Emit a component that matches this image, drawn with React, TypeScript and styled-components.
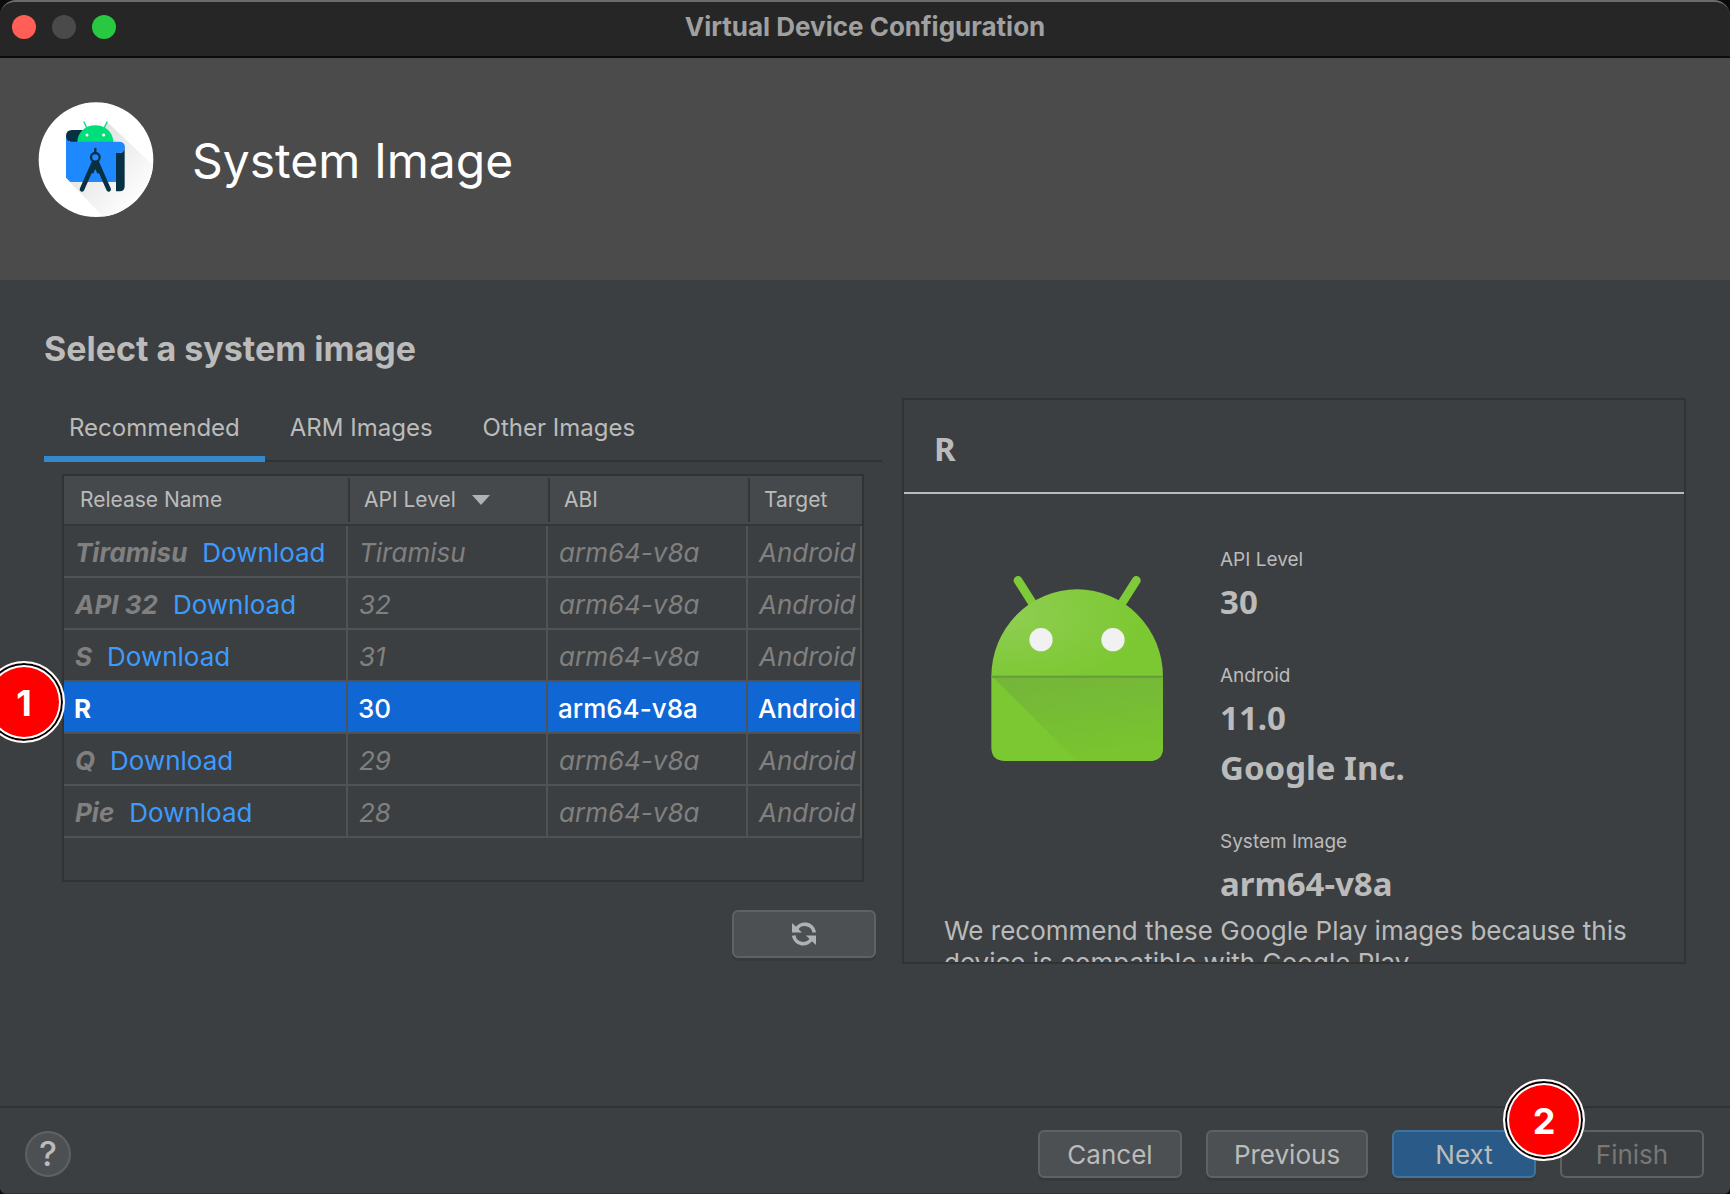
import React, { useState } from 'react';
import styled, { createGlobalStyle, css } from 'styled-components';

const ui = 'Inter, "Liberation Sans", sans-serif';
const detailFont = '"Noto Sans", "Open Sans", sans-serif';

const c = {
  bg: '#3c3f41',
  text: '#bbbbbb',
  muted: '#808080',
  line: '#323232',
  grid: '#505355',
  headerCell: '#45494b',
  headerLine: '#33373a',
  link: '#3d9bff',
  selected: '#1067d3',
  button: '#4c5052',
  buttonBorder: '#5e6263',
};

const GlobalStyle = createGlobalStyle`
  *, *::before, *::after { box-sizing: border-box; }
  body { margin: 0; background: #0b0b0b; }
  button { font: inherit; cursor: pointer; }
`;

const Window = styled.div`
  min-height: 100vh;
  display: flex;
  flex-direction: column;
  overflow: hidden;
  border-top: 2px solid #6c6c6c;
  border-bottom: 1px solid #343234;
  border-radius: 16px 16px 6px 6px;
  background: ${c.bg};
  color: ${c.text};
  font-family: ${ui};
`;

const TitleBar = styled.header`
  display: grid;
  grid-template-columns: 1fr auto 1fr;
  align-items: center;
  height: 56px;
  padding: 0 12px 4px;
  background: #262626;
  border-bottom: 2px solid #0c0c0c;
`;

const TrafficLights = styled.div`
  display: flex;
  gap: 16px;
`;

const Light = styled.button<{ $color: string }>`
  width: 24px;
  height: 24px;
  padding: 0;
  border: 0;
  border-radius: 50%;
  background: ${(p) => p.$color};
`;

const WindowTitle = styled.div`
  font-size: 26px;
  line-height: 32px;
  font-weight: 700;
  color: #a0a0a0;
`;

const Banner = styled.div`
  display: flex;
  align-items: flex-start;
  gap: 38px;
  height: 222px;
  padding: 44px 38px;
  background: #4b4b4b;
`;

const BannerTitle = styled.h1`
  margin: 0;
  font-size: 48px;
  line-height: 118px;
  font-weight: 400;
  color: #ffffff;
`;

const Main = styled.main`
  flex: 1;
  padding: 49px 44px 24px;
`;

const SectionTitle = styled.h2`
  margin: 0 0 29px;
  font-size: 34px;
  line-height: 40px;
  font-weight: 700;
`;

const Columns = styled.div`
  display: grid;
  grid-template-columns: minmax(0, 838fr) minmax(0, 784fr);
  gap: 20px;
  align-items: start;
`;

const TabList = styled.div`
  display: flex;
  box-shadow: inset 0 -2px ${c.line};
`;

const Tab = styled.button<{ $active: boolean }>`
  height: 64px;
  padding: 0 25px;
  border: 0;
  border-top: 2px solid transparent;
  border-bottom: 6px solid ${(p) => (p.$active ? '#3489cc' : 'transparent')};
  background: none;
  color: ${c.text};
  font-size: 24px;
  line-height: 30px;
`;

const TableFrame = styled.div`
  min-height: 408px;
  margin: 12px 18px 28px;
  border: 2px solid ${c.line};
`;

const Table = styled.table`
  width: 100%;
  table-layout: fixed;
  border-spacing: 0;
`;

const Col = styled.col<{ $width?: number }>`
  ${(p) => p.$width && css`width: ${p.$width}px;`}
`;

const HeadCell = styled.th`
  height: 50px;
  padding: 0;
  background: ${c.headerCell};
  border-bottom: 2px solid ${c.headerLine};
  font-size: 21px;
  line-height: 44px;
  font-weight: 400;
  text-align: left;
`;

const HeadLabel = styled.div<{ $divided: boolean }>`
  display: flex;
  align-items: center;
  gap: 16px;
  padding-left: 14px;
  border-left: 2px solid ${(p) => (p.$divided ? c.headerLine : 'transparent')};
`;

const Cell = styled.td<{ $selected: boolean }>`
  position: relative;
  height: 52px;
  padding: 4px 0 0 ${(p) => (p.$selected ? 10 : 11)}px;
  border-right: 2px solid ${c.grid};
  border-bottom: 2px solid ${c.grid};
  background: ${(p) => (p.$selected ? c.selected : 'transparent')};
  color: ${(p) => (p.$selected ? '#ffffff' : c.muted)};
  font-size: 26px;
  line-height: 32px;
  font-style: ${(p) => (p.$selected ? 'normal' : 'italic')};
  font-weight: ${(p) => (p.$selected ? 500 : 400)};
  white-space: nowrap;
`;

const ReleaseName = styled.span`
  font-weight: 700;
`;

const DownloadLink = styled.a`
  margin-left: 15px;
  color: ${c.link};
  font-style: normal;
  text-decoration: none;
`;

const Toolbar = styled.div`
  display: flex;
  justify-content: flex-end;
  padding-right: 6px;
`;

const Button = styled.button<{ $variant?: 'primary' | 'disabled'; $wide?: boolean }>`
  display: flex;
  align-items: center;
  justify-content: center;
  width: ${(p) => (p.$wide ? 162 : 144)}px;
  height: 48px;
  padding: 2px 0 0;
  border: 2px solid ${c.buttonBorder};
  border-radius: 6px;
  background: ${c.button};
  box-shadow: 0 3px #37393b;
  color: ${c.text};
  font-size: 26px;
  line-height: 32px;
  ${(p) => p.$variant === 'primary' && css`
    border-color: #3f74a0;
    background: #2a5a87;
  `}
  ${(p) => p.$variant === 'disabled' && css`
    background: transparent;
    box-shadow: none;
    color: #777777;
  `}
`;

const RefreshButton = styled(Button)`
  padding: 0;
`;

const Panel = styled.section`
  height: 566px;
  overflow: hidden;
  border: 2px solid ${c.line};
`;

const PanelTitle = styled.h3`
  margin: 0;
  padding: 24px 30px 18px;
  border-bottom: 2px solid ${c.text};
  font-family: ${detailFont};
  font-size: 33px;
  line-height: 50px;
  font-weight: 700;
`;

const PanelBody = styled.div`
  display: flex;
  align-items: flex-start;
  gap: 55px;
  padding: 53px 24px 6px 85px;
`;

const RobotBox = styled.div`
  padding-top: 27px;
  line-height: 0;
`;

const Facts = styled.dl`
  display: flex;
  flex-direction: column;
  gap: 36px;
  margin: 0;
`;

const FactLabel = styled.dt`
  margin-bottom: 4px;
  font-size: 19px;
  line-height: 26px;
`;

const FactValue = styled.dd`
  margin: 0;
  font-family: ${detailFont};
  font-size: 33px;
  line-height: 50px;
  font-weight: 700;
`;

const Note = styled.p`
  margin: 0;
  padding: 0 40px;
  font-size: 26px;
  line-height: 32px;
`;

const Footer = styled.footer`
  display: flex;
  align-items: flex-start;
  justify-content: space-between;
  padding: 22px 26px 15px 25px;
  border-top: 2px solid ${c.line};
`;

const Actions = styled.div`
  display: flex;
  gap: 24px;
`;

const HelpButton = styled.button`
  width: 46px;
  height: 46px;
  margin-top: 1px;
  padding: 0;
  border: 2px solid ${c.buttonBorder};
  border-radius: 50%;
  background: ${c.button};
  color: ${c.text};
  font-size: 34px;
  line-height: 40px;
  font-weight: 500;
`;

const BadgeAnchor = styled.div`
  position: relative;
`;

const Badge = styled.span<{ $place: 'row' | 'button' }>`
  position: absolute;
  z-index: 1;
  ${(p) => (p.$place === 'row' ? 'top: -21px; left: -81px;' : 'top: -51px; right: -49px;')}
  width: 82px;
  height: 82px;
  border: 2px solid #ffffff;
  border-radius: 50%;
  background: #ff0000;
  box-shadow: inset 0 0 0 2px #000000, inset 0 0 0 4px #ffffff;
  color: #ffffff;
  font-size: 36px;
  line-height: 80px;
  font-style: normal;
  font-weight: 700;
  text-align: center;
`;

const StudioLogo = () => (
  <svg width="116" height="116" viewBox="24 35 348 348" aria-hidden="true">
    <defs>
      <linearGradient id="longShadow" x1="0" y1="0" x2="1" y2="1">
        <stop offset="0.1" stopColor="#dcdcdc" />
        <stop offset="0.75" stopColor="#fdfdfd" />
      </linearGradient>
      <clipPath id="disc"><circle cx="198" cy="208" r="172" /></clipPath>
    </defs>
    <circle cx="198" cy="208" r="172" fill="#fff" />
    <path d="M231 94 390 245 240 400 114 270Z" fill="url(#longShadow)" clipPath="url(#disc)" />
    <path d="M158 119H126Q108 119 108 137V150L128 157H158Z" fill="#073042" />
    <path d="m170 112-8-17M223 112l8-17" stroke="#00de7a" strokeWidth="4" strokeLinecap="round" />
    <path d="M142 156C142 126 166 105 196 105S250 126 250 156Z" fill="#00de7a" />
    <circle cx="171" cy="134" r="4.5" fill="#fff" />
    <circle cx="221" cy="134" r="4.5" fill="#fff" />
    <path d="M108 136Q108 154 126 154H266Q285 154 285 171Q285 188 268 188H258V275H121L108 262Z" fill="#1e88ff" />
    <path d="M258 188H268Q281 188 284 176V288Q284 303 269 303H258Z" fill="#073042" />
    <g stroke="#073042" fill="none" strokeLinecap="round">
      <path d="M196 176v10" strokeWidth="7" />
      <circle cx="196" cy="201" r="13" strokeWidth="7" />
      <path d="M190 220 156 297M202 220l34 77" strokeWidth="14" />
    </g>
    <path d="M187 213h18l13 32q-22 10-44 0Z" fill="#073042" />
    <path d="M196 236 179 275H213Z" fill="#1e88ff" />
  </svg>
);

const Robot = () => (
  <svg width="176" height="189" viewBox="296 552 528 567" role="img" aria-label="Android">
    <defs>
      <radialGradient id="dome" cx="0.1" cy="0.3" r="0.8">
        <stop offset="0" stopColor="#8fce52" />
        <stop offset="1" stopColor="#7cc832" />
      </radialGradient>
      <linearGradient id="fold" x1="0" y1="0" x2="0.3" y2="1">
        <stop offset="0" stopColor="#74b53a" />
        <stop offset="1" stopColor="#79c42f" />
      </linearGradient>
    </defs>
    <path d="m383 571 48 76M738 571l-48 76" stroke="#7fca38" strokeWidth="26" strokeLinecap="round" />
    <path d="M303 860A257.500 262 0 0 1 818 860Z" fill="url(#dome)" />
    <path d="M303 858H818V1072Q818 1113 777 1113H344Q303 1113 303 1072Z" fill="#7cc832" />
    <path d="M308 862H818V1072Q818 1113 777 1113H560Z" fill="url(#fold)" />
    <path d="M303 860H818" stroke="#659c3a" strokeWidth="6" />
    <circle cx="452" cy="749" r="35" fill="#f1f1f1" />
    <circle cx="668" cy="749" r="35" fill="#f1f1f1" />
  </svg>
);

const RefreshIcon = () => (
  <svg width="24" height="24" viewBox="0 0 24 24" aria-hidden="true">
    <g id="half">
      <path d="M4.2 7.6A9.6 9.6 0 0 1 22.3 10.4" fill="none" stroke="#afb1b3" strokeWidth="3.6" />
      <path d="M0 1V10.6H10Z" fill="#afb1b3" />
    </g>
    <use href="#half" transform="rotate(180 12 12)" />
  </svg>
);

const SortArrow = () => (
  <svg width="18" height="10" viewBox="0 0 18 10" aria-hidden="true">
    <path d="M0 0H18L9 10Z" fill="#afb1b3" />
  </svg>
);

const tabs = ['Recommended', 'ARM Images', 'Other Images'];
const columns: { label: string; width?: number }[] = [
  { label: 'Release Name', width: 284 },
  { label: 'API Level', width: 200 },
  { label: 'ABI', width: 200 },
  { label: 'Target' },
];
const images = [
  { name: 'Tiramisu', api: 'Tiramisu' },
  { name: 'API 32', api: '32' },
  { name: 'S', api: '31' },
  { name: 'R', api: '30', installed: true },
  { name: 'Q', api: '29' },
  { name: 'Pie', api: '28' },
];
const facts = [
  { label: 'API Level', values: ['30'] },
  { label: 'Android', values: ['11.0', 'Google Inc.'] },
  { label: 'System Image', values: ['arm64-v8a'] },
];

export default function App() {
  const [tab, setTab] = useState(tabs[0]);

  return (
    <>
      <GlobalStyle />
      <Window>
        <TitleBar>
          <TrafficLights>
            <Light $color="#ff5f57" aria-label="Close" />
            <Light $color="#4a4a4a" aria-label="Minimize" />
            <Light $color="#28c840" aria-label="Zoom" />
          </TrafficLights>
          <WindowTitle>Virtual Device Configuration</WindowTitle>
        </TitleBar>

        <Banner>
          <StudioLogo />
          <BannerTitle>System Image</BannerTitle>
        </Banner>

        <Main>
          <SectionTitle>Select a system image</SectionTitle>
          <Columns>
            <div>
              <TabList role="tablist">
                {tabs.map((t) => (
                  <Tab key={t} role="tab" aria-selected={t === tab} $active={t === tab} onClick={() => setTab(t)}>
                    {t}
                  </Tab>
                ))}
              </TabList>
              <TableFrame>
                <Table>
                  <colgroup>
                    {columns.map((col) => <Col key={col.label} $width={col.width} />)}
                  </colgroup>
                  <thead>
                    <tr>
                      {columns.map((col, i) => (
                        <HeadCell key={col.label} scope="col">
                          <HeadLabel $divided={i > 0}>
                            {col.label}
                            {col.label === 'API Level' && <SortArrow />}
                          </HeadLabel>
                        </HeadCell>
                      ))}
                    </tr>
                  </thead>
                  <tbody>
                    {images.map((img) => {
                      const on = !!img.installed;
                      return (
                        <tr key={img.name} aria-selected={on}>
                          <Cell $selected={on}>
                            <ReleaseName>{img.name}</ReleaseName>
                            {on ? <Badge $place="row">1</Badge> : <DownloadLink href="#download">Download</DownloadLink>}
                          </Cell>
                          <Cell $selected={on}>{img.api}</Cell>
                          <Cell $selected={on}>arm64-v8a</Cell>
                          <Cell $selected={on}>Android</Cell>
                        </tr>
                      );
                    })}
                  </tbody>
                </Table>
              </TableFrame>
              <Toolbar>
                <RefreshButton aria-label="Refresh"><RefreshIcon /></RefreshButton>
              </Toolbar>
            </div>

            <Panel>
              <PanelTitle>R</PanelTitle>
              <PanelBody>
                <RobotBox><Robot /></RobotBox>
                <Facts>
                  {facts.map((f) => (
                    <div key={f.label}>
                      <FactLabel>{f.label}</FactLabel>
                      {f.values.map((v) => <FactValue key={v}>{v}</FactValue>)}
                    </div>
                  ))}
                </Facts>
              </PanelBody>
              <Note>We recommend these Google Play images because this device is compatible with Google Play.</Note>
            </Panel>
          </Columns>
        </Main>

        <Footer>
          <HelpButton aria-label="Help">?</HelpButton>
          <Actions>
            <Button>Cancel</Button>
            <Button $wide>Previous</Button>
            <BadgeAnchor>
              <Button $variant="primary">Next</Button>
              <Badge $place="button">2</Badge>
            </BadgeAnchor>
            <Button $variant="disabled" disabled>Finish</Button>
          </Actions>
        </Footer>
      </Window>
    </>
  );
}
